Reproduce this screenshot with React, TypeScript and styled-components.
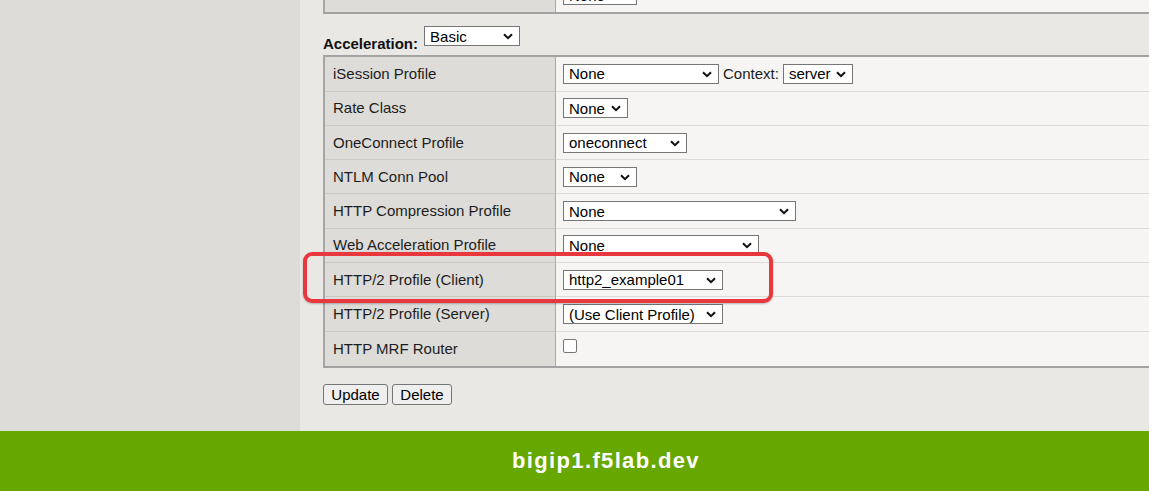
import React from "react";
import styled, { createGlobalStyle } from "styled-components";

const Global = createGlobalStyle`
  html, body { margin: 0; padding: 0; }
  body {
    width: 1149px;
    height: 491px;
    overflow: hidden;
    font-family: "Liberation Sans", Arial, sans-serif;
  }
`;

const Page = styled.div`
  display: flex;
  flex-direction: column;
  height: 491px;
`;

const Main = styled.div`
  display: flex;
  height: 431px;
`;

const Sidebar = styled.div`
  flex: none;
  width: 300px;
  background: #dddcd9;
`;

const Content = styled.div`
  flex: 1;
  min-width: 0;
  background: #eae8e4;
  padding-left: 23px;
  overflow: hidden;
`;

const Table = styled.table<{ $offset?: number }>`
  border-collapse: separate;
  border-spacing: 0;
  width: calc(100% + 20px);
  margin-top: ${(p) => p.$offset ?? 0}px;
  border-top: 2px solid #a2a2a2;
  border-bottom: 2px solid #a2a2a2;
  border-left: 2px solid #a6a6a6;
  font-size: 15px;
  color: #1c1c1c;
`;

const Row = styled.tr`
  height: 34.3px;
  &:last-child td { border-bottom: none; }
`;

const LabelCell = styled.td`
  box-sizing: border-box;
  width: 231px;
  padding: 0 8px 1px;
  background: #dedcd8;
  border-right: 1px solid #a8a8a8;
  border-bottom: 1px solid #cbc9c5;
  white-space: nowrap;
`;

const ValueCell = styled.td`
  padding: 0 7px;
  background: #f6f5f3;
  border-bottom: 1px solid #dcdad6;
`;

const ValueLine = styled.div`
  display: flex;
  align-items: center;
  gap: 4px;
`;

const SectionHead = styled.div`
  display: flex;
  align-items: flex-end;
  gap: 6px;
  margin: 12px 0 9px;
`;

const SectionTitle = styled.span`
  font-weight: bold;
  font-size: 15px;
  line-height: 15px;
  color: #111;
  margin-bottom: -5px;
`;

const SelectWrap = styled.span<{ $w: number }>`
  position: relative;
  display: inline-flex;
  flex: none;
  width: ${(p) => p.$w}px;
  height: 20px;
`;

const NativeSelect = styled.select`
  appearance: none;
  box-sizing: border-box;
  width: 100%;
  height: 100%;
  margin: 0;
  padding: 0 20px 0 5px;
  border: 1px solid #767676;
  border-radius: 0;
  background: #fff;
  color: #000;
  font: 15px "Liberation Sans", Arial, sans-serif;
  outline: none;
`;

const Chevron = styled.svg`
  position: absolute;
  right: 7px;
  top: 50%;
  margin-top: -3px;
  width: 10px;
  height: 7px;
  pointer-events: none;
`;

const ContextLabel = styled.span`
  font-size: 15px;
  color: #1c1c1c;
`;

const Checkbox = styled.input`
  appearance: none;
  box-sizing: border-box;
  width: 14px;
  height: 14px;
  margin: -6px 0 0 0;
  border: 1px solid #767676;
  border-radius: 2px;
  background: #fff;
`;

const TableArea = styled.div`
  position: relative;
`;

const Highlight = styled.div`
  position: absolute;
  top: 197px;
  left: -20px;
  width: 470px;
  height: 51px;
  box-sizing: border-box;
  border: 4px solid #e8383d;
  border-radius: 9px;
  box-shadow: 0 1px 2px rgba(0, 0, 0, 0.25);
  pointer-events: none;
`;

const Actions = styled.div`
  display: flex;
  gap: 4px;
  margin-top: 16px;
`;

const Button = styled.button<{ $w: number }>`
  box-sizing: border-box;
  width: ${(p) => p.$w}px;
  height: 21px;
  padding: 0;
  border: 1px solid #767676;
  border-radius: 3px;
  background: #efefef;
  color: #000;
  font: 15px "Liberation Sans", Arial, sans-serif;
`;

const Footer = styled.div`
  height: 60px;
  display: flex;
  align-items: center;
  justify-content: center;
  padding-left: 63px;
  background: #66a800;
  color: #fff;
  font-weight: bold;
  font-size: 22px;
  letter-spacing: 1.35px;
`;

function Select({ w, value }: { w: number; value: string }) {
  return (
    <SelectWrap $w={w}>
      <NativeSelect defaultValue={value}>
        <option value={value}>{value}</option>
      </NativeSelect>
      <Chevron viewBox="0 0 10 7">
        <path d="M1 1.2 L5 5.2 L9 1.2" fill="none" stroke="#111" strokeWidth="2" />
      </Chevron>
    </SelectWrap>
  );
}

type Item = { label: string; content: React.ReactNode };

const items: Item[] = [
  {
    label: "iSession Profile",
    content: (
      <>
        <Select w={156} value="None" />
        <ContextLabel>Context:</ContextLabel>
        <Select w={70} value="server" />
      </>
    ),
  },
  { label: "Rate Class", content: <Select w={65} value="None" /> },
  { label: "OneConnect Profile", content: <Select w={124} value="oneconnect" /> },
  { label: "NTLM Conn Pool", content: <Select w={74} value="None" /> },
  { label: "HTTP Compression Profile", content: <Select w={233} value="None" /> },
  { label: "Web Acceleration Profile", content: <Select w={196} value="None" /> },
  { label: "HTTP/2 Profile (Client)", content: <Select w={160} value="http2_example01" /> },
  { label: "HTTP/2 Profile (Server)", content: <Select w={160} value="(Use Client Profile)" /> },
  { label: "HTTP MRF Router", content: <Checkbox type="checkbox" /> },
];

export default function App() {
  return (
    <>
      <Global />
      <Page>
        <Main>
          <Sidebar />
          <Content>
            <Table $offset={-24}>
              <tbody>
                <Row>
                  <LabelCell />
                  <ValueCell>
                    <ValueLine>
                      <Select w={74} value="None" />
                    </ValueLine>
                  </ValueCell>
                </Row>
              </tbody>
            </Table>
            <SectionHead>
              <SectionTitle>Acceleration:</SectionTitle>
              <Select w={96} value="Basic" />
            </SectionHead>
            <TableArea>
              <Table>
                <tbody>
                  {items.map((it) => (
                    <Row key={it.label}>
                      <LabelCell>{it.label}</LabelCell>
                      <ValueCell>
                        <ValueLine>{it.content}</ValueLine>
                      </ValueCell>
                    </Row>
                  ))}
                </tbody>
              </Table>
              <Highlight />
            </TableArea>
            <Actions>
              <Button type="button" $w={65}>Update</Button>
              <Button type="button" $w={60}>Delete</Button>
            </Actions>
          </Content>
        </Main>
        <Footer>bigip1.f5lab.dev</Footer>
      </Page>
    </>
  );
}
